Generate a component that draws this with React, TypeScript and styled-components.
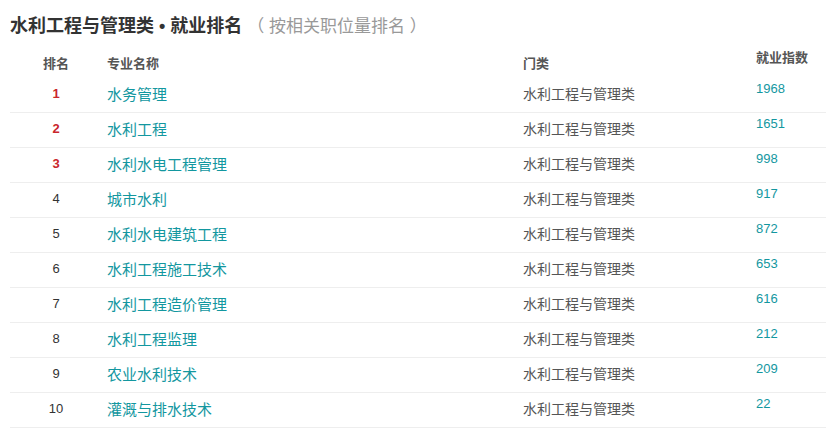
import React from "react";
import styled, { createGlobalStyle } from "styled-components";

const GlobalStyle = createGlobalStyle`
  body {
    margin: 0;
    background: #fff;
    font-family: "Liberation Sans", "Noto Sans CJK SC", sans-serif;
  }
`;

const Wrap = styled.div`
  width: 826px;
  height: 444px;
  padding-left: 10px;
  box-sizing: border-box;
  overflow: hidden;
`;

const Title = styled.h2`
  margin: 0;
  padding-top: 14px;
  height: 31px;
  font-size: 18px;
  line-height: 24px;
  font-weight: bold;
  color: #333;
  span {
    font-size: 17px;
    font-weight: normal;
    color: #999;
  }
`;

const Row = styled.div<{ head?: boolean }>`
  display: grid;
  grid-template-columns: 90px 416px 233px 1fr;
  box-sizing: border-box;
  height: ${(p) => (p.head ? "33px" : "35px")};
  padding: ${(p) => (p.head ? "2px 0 0" : "0 0 4px")};
  border-bottom: ${(p) => (p.head ? "none" : "1px solid #eee")};
`;

const Cell = styled.div<{ head?: boolean }>`
  padding-left: 7px;
  display: flex;
  align-items: center;
  color: #555;
  font-weight: ${(p) => (p.head ? "bold" : "normal")};
  font-size: ${(p) => (p.head ? "13px" : "14px")};
`;

const RankCell = styled.div<{ top?: boolean; head?: boolean }>`
  display: flex;
  align-items: center;
  justify-content: center;
  padding-left: 2px;
  font-size: 13px;
  font-weight: ${(p) => (p.top || p.head ? "bold" : "normal")};
  color: ${(p) => (p.top ? "#c9262c" : p.head ? "#555" : "#333")};
`;

const NameCell = styled(Cell)`
  font-size: 15px;
  color: #13979f;
`;

const IndexCell = styled.div<{ head?: boolean }>`
  padding-left: 7px;
  padding-top: 3px;
  font-size: 13px;
  line-height: 16px;
  color: ${(p) => (p.head ? "#555" : "#13979f")};
  font-weight: ${(p) => (p.head ? "bold" : "normal")};
`;

const data: [string, number][] = [
  ["水务管理", 1968],
  ["水利工程", 1651],
  ["水利水电工程管理", 998],
  ["城市水利", 917],
  ["水利水电建筑工程", 872],
  ["水利工程施工技术", 653],
  ["水利工程造价管理", 616],
  ["水利工程监理", 212],
  ["农业水利技术", 209],
  ["灌溉与排水技术", 22],
];

export default function App() {
  return (
    <>
      <GlobalStyle />
      <Wrap>
        <Title>
          水利工程与管理类 • 就业排名 <span>（ 按相关职位量排名 ）</span>
        </Title>
        <Row head>
          <RankCell head>排名</RankCell>
          <Cell head>专业名称</Cell>
          <Cell head>门类</Cell>
          <IndexCell head>就业指数</IndexCell>
        </Row>
        {data.map(([name, idx], i) => (
          <Row key={name}>
            <RankCell top={i < 3}>{i + 1}</RankCell>
            <NameCell>{name}</NameCell>
            <Cell>水利工程与管理类</Cell>
            <IndexCell>{idx}</IndexCell>
          </Row>
        ))}
      </Wrap>
    </>
  );
}
